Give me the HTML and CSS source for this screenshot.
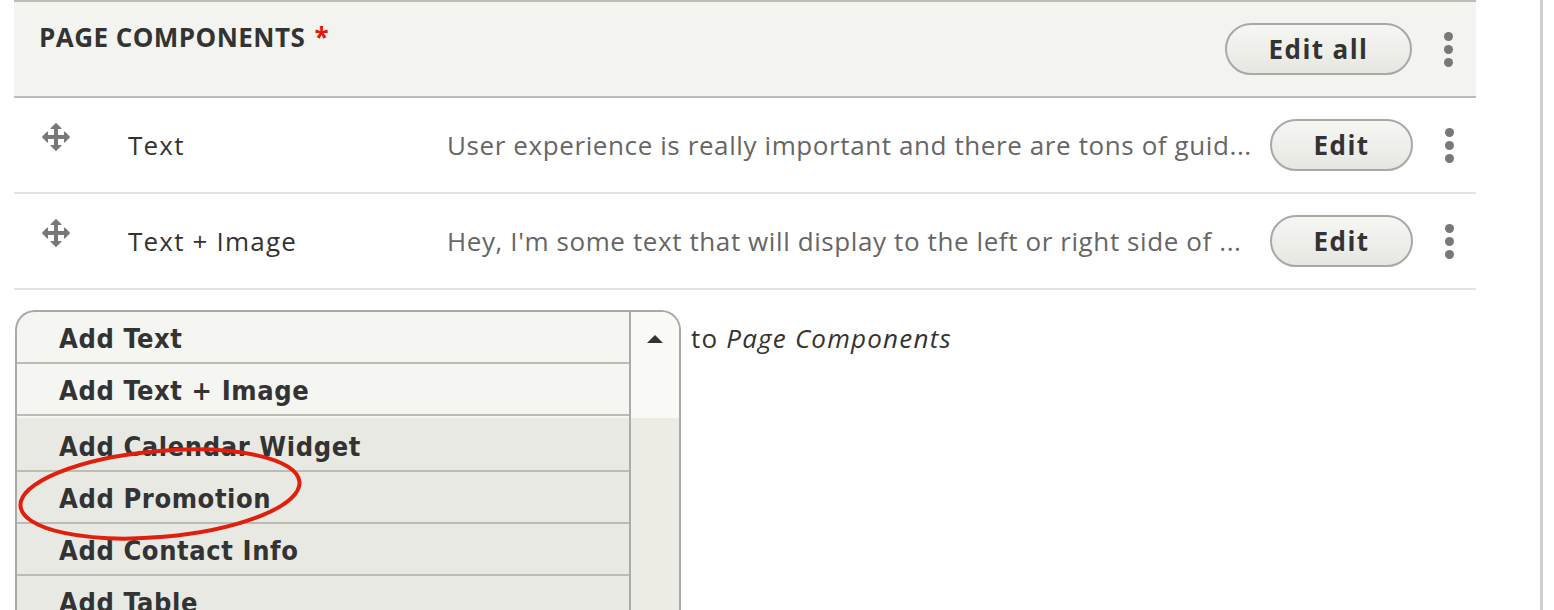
FILE: index.html
```html
<!DOCTYPE html>
<html lang="en">
<head>
<meta charset="utf-8">
<title>Page Components</title>
<link rel="stylesheet" href="styles.css">
</head>
<body>
<div class="screen">
  <div class="panel">
    <div class="header">
      <h2 class="title">PAGE COMPONENTS <span class="req">*</span></h2>
      <div class="actions">
        <button class="btn btn-all">Edit all</button>
        <span class="kebab"><i></i><i></i><i></i></span>
      </div>
    </div>

    <div class="row">
      <span class="drag">
        <svg viewBox="0 0 16 16" width="32" height="32"><path fill="#787878" d="M14.904 7.753l-2.373-2.372c-.291-.292-.529-.193-.529.22v1.399h-3v-3h1.398c.414 0 .512-.239.221-.53l-2.371-2.372c-.137-.136-.36-.136-.497 0l-2.372 2.372c-.292.292-.193.53.22.53h1.399v3h-3v-1.369c0-.413-.239-.511-.53-.22l-2.372 2.372c-.136.136-.136.359 0 .494l2.372 2.372c.291.292.53.192.53-.219v-1.430h3v3h-1.4c-.413 0-.511.238-.22.529l2.374 2.373c.137.137.36.137.495 0l2.373-2.373c.29-.291.19-.529-.222-.529h-1.398v-3h3v1.4c0 .412.238.511.529.219l2.373-2.371c.137-.137.137-.359 0-.495z"/></svg>
      </span>
      <span class="label">Text</span>
      <span class="summary">User experience is really important and there are tons of guid...</span>
      <div class="actions">
        <button class="btn btn-edit">Edit</button>
        <span class="kebab"><i></i><i></i><i></i></span>
      </div>
    </div>

    <div class="row">
      <span class="drag">
        <svg viewBox="0 0 16 16" width="32" height="32"><path fill="#787878" d="M14.904 7.753l-2.373-2.372c-.291-.292-.529-.193-.529.22v1.399h-3v-3h1.398c.414 0 .512-.239.221-.53l-2.371-2.372c-.137-.136-.36-.136-.497 0l-2.372 2.372c-.292.292-.193.53.22.53h1.399v3h-3v-1.369c0-.413-.239-.511-.53-.22l-2.372 2.372c-.136.136-.136.359 0 .494l2.372 2.372c.291.292.53.192.53-.219v-1.430h3v3h-1.4c-.413 0-.511.238-.22.529l2.374 2.373c.137.137.36.137.495 0l2.373-2.373c.29-.291.19-.529-.222-.529h-1.398v-3h3v1.4c0 .412.238.511.529.219l2.373-2.371c.137-.137.137-.359 0-.495z"/></svg>
      </span>
      <span class="label">Text + Image</span>
      <span class="summary">Hey, I'm some text that will display to the left or right side of ...</span>
      <div class="actions">
        <button class="btn btn-edit">Edit</button>
        <span class="kebab"><i></i><i></i><i></i></span>
      </div>
    </div>

    <div class="add">
      <div class="select">
        <ul class="options">
          <li>Add Text</li>
          <li>Add Text + Image</li>
          <li class="tall">Add Calendar Widget</li>
          <li>Add Promotion</li>
          <li>Add Contact Info</li>
          <li>Add Table</li>
        </ul>
        <div class="scroll"><span class="arrow"></span></div>
      </div>
      <span class="to">to <em>Page Components</em></span>
    </div>

    <svg class="annotation" width="300" height="110" viewBox="0 0 300 110">
      <ellipse cx="146" cy="52" rx="140" ry="43" transform="rotate(-5 146 52)" fill="none" stroke="#e01f0d" stroke-width="4"/>
    </svg>
  </div>
</div>
</body>
</html>
```

FILE: styles.css
```css
* { box-sizing: border-box; }
html, body { margin: 0; padding: 0; background: #fff; }
body {
  font-family: "Open Sans", "DejaVu Sans", sans-serif;
  color: #333;
}
.screen {
  width: 1543px;
  height: 610px;
  border-right: 3px solid #cfcfcf;
  overflow: hidden;
}
.panel {
  position: relative;
  margin-left: 14px;
  width: 1462px;
}
.header {
  height: 98px;
  display: flex;
  justify-content: space-between;
  align-items: center;
  background: #f3f3ef;
  border-top: 2px solid #bdbdb8;
  border-bottom: 2px solid #bdbdb8;
}
.title {
  align-self: flex-start;
  margin: 0;
  padding: 19px 0 0 25px;
  font-size: 26px;
  line-height: 32px;
  font-weight: 700;
  letter-spacing: 0.45px;
  color: #333;
}
.req { color: #e3160b; margin-left: 2px; }
.actions {
  display: flex;
  align-items: center;
  margin-left: auto;
}
.btn {
  font-family: "Open Sans", "DejaVu Sans", sans-serif;
  font-weight: 700;
  font-size: 26px;
  letter-spacing: 1.4px;
  color: #333;
  height: 52px;
  border: 2px solid #a8a8a8;
  border-radius: 26px;
  background: linear-gradient(to bottom, #f6f6f3, #e7e7e2);
  padding: 0;
  display: flex;
  align-items: center;
  justify-content: center;
}
.btn-all { width: 187px; height: 52px; }
.btn-edit { width: 143px; }
.kebab {
  display: flex;
  flex-direction: column;
  gap: 4px;
  width: 10px;
  margin: 0 22px 0 32px;
}
.kebab i {
  display: block;
  width: 9px;
  height: 9px;
  border-radius: 50%;
  background: #787878;
}
.row {
  height: 96px;
  display: flex;
  align-items: center;
  border-bottom: 2px solid #e5e5df;
}
.drag {
  align-self: flex-start;
  margin: 23px 0 0 26px;
  width: 88px;
  height: 32px;
}
.drag svg { display: block; }
.label {
  width: 319px;
  font-size: 26px;
  letter-spacing: 1.2px;
  color: #333;
}
.summary {
  flex: 1;
  min-width: 0;
  white-space: nowrap;
  overflow: hidden;
  font-size: 26px;
  letter-spacing: 0.6px;
  color: #666;
}
.row .actions { margin-left: 18px; }
.row .kebab { margin-right: 21px; }
.add {
  display: flex;
  align-items: flex-start;
  margin-top: 20px;
  margin-left: 1px;
}
.select {
  display: flex;
  width: 666px;
  height: 320px;
  border: 2px solid #a9a9a9;
  border-bottom: 0;
  border-radius: 20px 20px 0 0;
  overflow: hidden;
  background: linear-gradient(to bottom, #f5f5f1 0, #f5f5f1 106px, #e9e9e4 106px);
}
.options {
  list-style: none;
  margin: 0;
  padding: 0;
  flex: 1;
}
.options li {
  height: 52px;
  padding: 3px 0 0 42px;
  display: flex;
  align-items: center;
  border-bottom: 2px solid #bcbcb7;
  font-family: "DejaVu Sans Condensed", "DejaVu Sans", sans-serif;
  font-stretch: condensed;
  font-weight: 700;
  font-size: 27px;
  letter-spacing: 0.6px;
  color: #333;
}
.options li.tall { height: 56px; padding-top: 7px; }
.scroll {
  width: 50px;
  border-left: 2px solid #ababab;
  background: linear-gradient(to bottom, #f9f9f6 0, #f9f9f6 106px, #ecece5 106px);
  display: flex;
  justify-content: center;
}
.arrow {
  margin-top: 23px;
  width: 0;
  height: 0;
  border-left: 8px solid transparent;
  border-right: 8px solid transparent;
  border-bottom: 8px solid #333;
}
.to {
  margin-left: 10px;
  padding-top: 10px;
  font-size: 26px;
  letter-spacing: 1.2px;
  color: #333;
}
.to em { font-style: italic; }
.annotation {
  position: absolute;
  left: 0;
  top: 442px;
}
```
